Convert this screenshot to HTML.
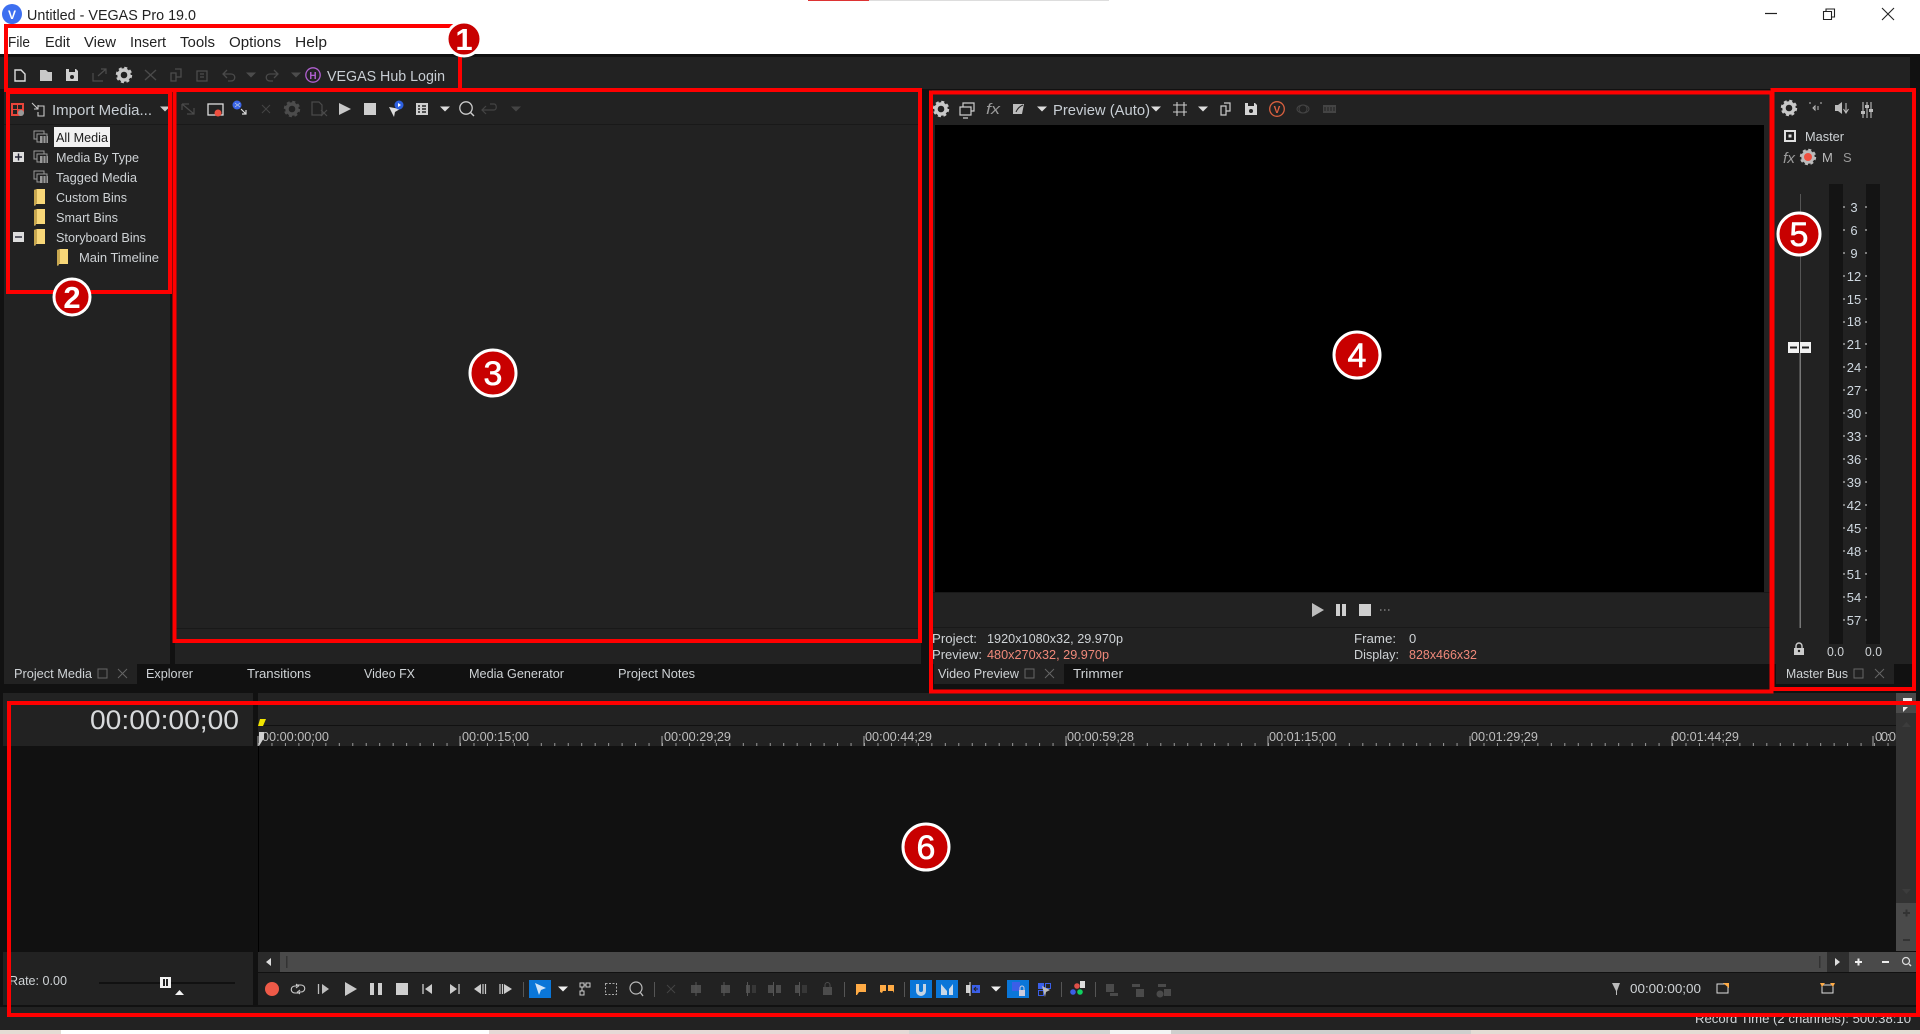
<!DOCTYPE html>
<html lang="en">
<head>
<meta charset="utf-8">
<title>VEGAS Pro 19.0</title>
<style>
html,body{margin:0;padding:0;width:1920px;height:1034px;overflow:hidden;background:#111}
svg{display:block}
text{font-family:"Liberation Sans",sans-serif;fill:#cfd3d6;font-size:13px}
.m{font-size:15px;fill:#222}
.w{font-size:15px;fill:#c8ced4}
.s{fill:#bdbdbd;font-size:13px}
.n{text-anchor:middle;font-size:13px;fill:#cfd8e0}
.d{font-size:31px;font-weight:bold;fill:#fff;text-anchor:middle}
.e{font-size:34px;font-weight:normal;fill:#fff;stroke:#fff;stroke-width:.6;text-anchor:middle}
.c{fill:#c80000;stroke:#fff;stroke-width:3}
.r{fill:none;stroke:#f00;stroke-width:4}
</style>
</head>
<body>
<svg width="1920" height="1034" viewBox="0 0 1920 1034" xmlns="http://www.w3.org/2000/svg">
<defs>
<g id="gear"><circle r="5" fill="none" stroke="currentColor" stroke-width="3.4"/><circle r="7" fill="none" stroke="currentColor" stroke-width="2.4" stroke-dasharray="3 2.5"/></g>
<g id="dd"><path d="M-5 -2.5H5L0 2.5Z" fill="currentColor"/></g>
<g id="media"><rect x="-7" y="-6" width="10" height="8" fill="#222" stroke="#999"/><rect x="-4" y="-3" width="10" height="8" fill="#222" stroke="#999"/><rect x="-1" y="-1" width="8" height="7" fill="#999"/><path d="M2 -1V6M5 -1V6" stroke="#333"/></g>
<g id="folder"><path d="M0 1L3 0H11V15H2L1 17L0 16Z" fill="#f8d778"/><path d="M0 1L3 0V14L1 16L0 16Z" fill="#c9a850"/></g>
<pattern id="ticks" x="258" y="0" width="13.467" height="20" patternUnits="userSpaceOnUse"><rect x="0" y="0" width="1" height="20" fill="#999"/></pattern>
</defs>

<!-- background -->
<rect width="1920" height="1034" fill="#111"/>
<rect width="1920" height="54" fill="#fff"/>
<rect x="808" y="0" width="61" height="1" fill="#d33"/><rect x="869" y="0" width="240" height="1" fill="#ddd"/>

<!-- title -->
<circle cx="12" cy="14" r="10" fill="#3d6ff0"/>
<text x="12" y="19" font-size="12" font-weight="bold" text-anchor="middle" style="fill:#fff;font-size:12px">V</text>
<text x="27" y="20" class="m" textLength="169" lengthAdjust="spacingAndGlyphs">Untitled - VEGAS Pro 19.0</text>
<path d="M1765 13.5H1777" stroke="#222" stroke-width="1.2"/>
<path d="M1823.500 11.500H1831.500V19.500H1823.500ZM1826 11.500V9H1834.500V17H1831.500" fill="none" stroke="#222" stroke-width="1.1"/>
<path d="M1882 8L1894 20M1894 8L1882 20" stroke="#222" stroke-width="1.1"/>
<text x="8" y="47" class="m" textLength="22" lengthAdjust="spacingAndGlyphs">File</text>
<text x="45" y="47" class="m" textLength="25" lengthAdjust="spacingAndGlyphs">Edit</text>
<text x="84" y="47" class="m" textLength="32" lengthAdjust="spacingAndGlyphs">View</text>
<text x="130" y="47" class="m" textLength="36" lengthAdjust="spacingAndGlyphs">Insert</text>
<text x="180" y="47" class="m" textLength="35" lengthAdjust="spacingAndGlyphs">Tools</text>
<text x="229" y="47" class="m" textLength="52" lengthAdjust="spacingAndGlyphs">Options</text>
<text x="295" y="47" class="m" textLength="32" lengthAdjust="spacingAndGlyphs">Help</text>

<!-- main toolbar strip -->
<rect x="0" y="57" width="1910" height="32" fill="#222"/>
<path d="M15 70H21L25 74V81H15Z" fill="none" stroke="#ddd" stroke-width="1.4"/>
<path d="M40 70H46L48 72H52V81H40Z" fill="#c8c8c8"/>
<path d="M66 69H76L78 71V81H66Z" fill="#d0d0d0"/><circle cx="72" cy="77" r="2" fill="#222"/><rect x="69" y="69" width="6" height="3" fill="#222"/>
<path d="M93 73V81H103M98 76L106 69M101 69H106V74" fill="none" stroke="#4c4c4c" stroke-width="1.2"/>
<use href="#gear" x="124" y="75" color="#c8c8c8"/>
<path d="M145 70L156 80M156 70L145 80" stroke="#4a4a4a" stroke-width="1.4"/>
<path d="M171 73H176V81H171ZM175 69H181V77H176" fill="none" stroke="#4c4c4c" stroke-width="1.3"/>
<path d="M197 71H207V81H197ZM200 74H204M200 77H204" fill="none" stroke="#4c4c4c" stroke-width="1.3"/>
<path d="M227 70L223 74L227 78M223 74H231C236 74 236 81 231 81H228" fill="none" stroke="#4a4a4a" stroke-width="1.3"/>
<use href="#dd" x="251" y="75" color="#4c4c4c"/>
<path d="M274 70L278 74L274 78M278 74H270C265 74 265 81 270 81H273" fill="none" stroke="#4a4a4a" stroke-width="1.3"/>
<use href="#dd" x="296" y="75" color="#4c4c4c"/>
<circle cx="313" cy="75" r="7.200" fill="none" stroke="#b060d0" stroke-width="1.300"/>
<text x="313" y="79" text-anchor="middle" style="font-size:10px;font-weight:bold;fill:#b060d0">H</text>
<text x="327" y="81" class="w" textLength="118" lengthAdjust="spacingAndGlyphs">VEGAS Hub Login</text>

<!-- panels -->
<rect x="4" y="90" width="166" height="574" fill="#222"/>
<rect x="175" y="90" width="746" height="574" fill="#222"/>
<rect x="932" y="90" width="838" height="574" fill="#222"/>
<rect x="1773" y="90" width="140" height="574" fill="#222"/>
<rect x="4" y="124" width="166" height="1" fill="#191919"/>
<rect x="175" y="124" width="746" height="1" fill="#191919"/>
<rect x="175" y="628" width="746" height="1" fill="#191919"/>

<!-- project media toolbar -->
<path d="M11 103H24V113H21V116H11Z" fill="#e8453a"/><path d="M13 105H17V109H13ZM18 105H22V109H18ZM13 110H17V114H13Z" fill="#222"/><circle cx="21" cy="113" r="3" fill="#999"/>
<path d="M32 103L38 109M38 105V109H34M38 106H44V116H38V112" fill="none" stroke="#c8c8c8" stroke-width="1.100"/>
<text x="52" y="115" class="w" textLength="100" lengthAdjust="spacingAndGlyphs">Import Media...</text>
<use href="#dd" x="165" y="109" color="#ccc"/>

<!-- tree -->
<rect x="54" y="127" width="56" height="20" fill="#f2f2f2"/>
<text x="56" y="142" style="fill:#1a1a1a" textLength="52" lengthAdjust="spacingAndGlyphs">All Media</text>
<use href="#media" x="41" y="137"/><use href="#media" x="41" y="157"/><use href="#media" x="41" y="177"/>
<use href="#folder" x="34" y="189"/><use href="#folder" x="34" y="209"/><use href="#folder" x="34" y="229"/><use href="#folder" x="57" y="249"/>
<text x="56" y="162" textLength="83" lengthAdjust="spacingAndGlyphs">Media By Type</text>
<text x="56" y="182" textLength="81" lengthAdjust="spacingAndGlyphs">Tagged Media</text>
<text x="56" y="202" textLength="71" lengthAdjust="spacingAndGlyphs">Custom Bins</text>
<text x="56" y="222" textLength="62" lengthAdjust="spacingAndGlyphs">Smart Bins</text>
<text x="56" y="242" textLength="90" lengthAdjust="spacingAndGlyphs">Storyboard Bins</text>
<text x="79" y="262" textLength="80" lengthAdjust="spacingAndGlyphs">Main Timeline</text>
<rect x="13" y="152" width="11" height="10" fill="#ddd"/><path d="M15 157H22M18.500 153.500V160.500" stroke="#223" stroke-width="1.400"/>
<rect x="13" y="232" width="11" height="10" fill="#ddd"/><path d="M15 237H22" stroke="#223" stroke-width="1.400"/>

<!-- explorer toolbar -->
<path d="M182 104H189M182 104V110M182 104L194 114M194 108V114H187" fill="none" stroke="#4a4a4a" stroke-width="1.200"/>
<rect x="208" y="104" width="15" height="11" fill="none" stroke="#ddd" stroke-width="1.300"/><circle cx="218" cy="113" r="3.500" fill="#ee5040"/>
<circle cx="237" cy="105" r="4.500" fill="#3a64e8"/><path d="M235 103L240 107M235 107L240 103" stroke="#bcd" stroke-width=".8"/><path d="M241 109L246 114M246 110V114H242" fill="none" stroke="#ddd" stroke-width="1.200"/>
<path d="M262 105L270 113M270 105L262 113" stroke="#444" stroke-width="1.100"/>
<use href="#gear" x="292" y="109" color="#4c4c4c"/>
<path d="M312 102H319L322 105V115H312ZM321 110L327 116M327 110L321 116" fill="none" stroke="#4a4a4a" stroke-width="1.200"/>
<path d="M339 103V115L351 109Z" fill="#c8c8c8"/>
<rect x="364" y="103" width="12" height="12" fill="#cfcfcf"/>
<path d="M389 107L400 109L395 112L394 117Z" fill="#ddd"/><circle cx="399" cy="105" r="4.500" fill="#2d60e0"/><path d="M398 103V107L401 105Z" fill="#fff"/>
<rect x="416" y="103" width="12" height="12" fill="#d0d0d0"/><path d="M418 106H420M418 109H420M418 112H420M422 106H426M422 109H426M422 112H426" stroke="#222" stroke-width="1.500"/>
<use href="#dd" x="445" y="109" color="#ddd"/>
<circle cx="466" cy="108" r="6.200" fill="none" stroke="#ccc" stroke-width="1.300"/><path d="M470.500 112.500L474 116" stroke="#ccc" stroke-width="1.400"/>
<path d="M486 106L482 110L486 114M482 110H494C497 110 497 104 494 104H490" fill="none" stroke="#444" stroke-width="1.200"/>
<use href="#dd" x="516" y="109" color="#444"/>

<!-- preview toolbar -->
<use href="#gear" x="941" y="109" color="#c8c8c8"/>
<path d="M960 107H971V115H960ZM963 107V103H974V111H971M963 118H968" fill="none" stroke="#ccc" stroke-width="1.200"/>
<text x="986" y="114" style="font-size:15px;font-style:italic;fill:#9a9a9a" textLength="14" lengthAdjust="spacingAndGlyphs">fx</text>
<path d="M1013 104H1024L1022 114H1013Z" fill="#bcbcbc"/><path d="M1016 112Q1018 107 1023 105" stroke="#222" fill="none"/>
<use href="#dd" x="1042" y="109" color="#ddd"/>
<text x="1053" y="115" class="w" textLength="97" lengthAdjust="spacingAndGlyphs">Preview (Auto)</text>
<use href="#dd" x="1156" y="109" color="#ddd"/>
<path d="M1173 105H1187M1173 112H1187M1177 102V116M1184 102V116" stroke="#ccc" stroke-width="1.100"/>
<use href="#dd" x="1203" y="109" color="#ddd"/>
<path d="M1221 106H1226V115H1221ZM1224 103H1230V111H1226" fill="none" stroke="#ccc" stroke-width="1.200"/>
<path d="M1245 103H1255L1257 105V115H1245Z" fill="#d4d4d4"/><circle cx="1251" cy="111" r="2" fill="#222"/><rect x="1248" y="103" width="6" height="3" fill="#222"/>
<circle cx="1277" cy="109" r="7.300" fill="none" stroke="#d8603f" stroke-width="1.300"/>
<text x="1277" y="113" text-anchor="middle" style="font-size:10px;font-weight:bold;fill:#e06040">V</text>
<ellipse cx="1303" cy="109" rx="6" ry="4" fill="none" stroke="#444"/><circle cx="1303" cy="109" r="4" fill="none" stroke="#444"/>
<rect x="1323" y="105" width="13" height="8" fill="#444"/><path d="M1325 107V111M1328 107V111M1331 107V111M1334 107V111" stroke="#222"/>

<!-- preview -->
<rect x="935" y="125" width="829" height="467" fill="#000"/>
<rect x="932" y="592" width="838" height="1" fill="#191919"/>
<rect x="932" y="627" width="838" height="1" fill="#191919"/>
<path d="M1312 603V617L1324 610Z" fill="#bcbcbc"/>
<rect x="1336" y="604" width="4" height="12" fill="#cfcfcf"/><rect x="1342" y="604" width="4" height="12" fill="#cfcfcf"/>
<rect x="1359" y="604" width="12" height="12" fill="#cfcfcf"/>
<path d="M1380 610h1.500M1384 610h1.500M1388 610h1.500" stroke="#aaa"/>
<text x="932" y="643" textLength="45" lengthAdjust="spacingAndGlyphs">Project:</text>
<text x="987" y="643" textLength="136" lengthAdjust="spacingAndGlyphs">1920x1080x32, 29.970p</text>
<text x="932" y="659" textLength="50" lengthAdjust="spacingAndGlyphs">Preview:</text>
<text x="987" y="659" style="fill:#f0897a" textLength="122" lengthAdjust="spacingAndGlyphs">480x270x32, 29.970p</text>
<text x="1354" y="643" textLength="42" lengthAdjust="spacingAndGlyphs">Frame:</text>
<text x="1409" y="643">0</text>
<text x="1354" y="659" textLength="45" lengthAdjust="spacingAndGlyphs">Display:</text>
<text x="1409" y="659" style="fill:#f0897a" textLength="68" lengthAdjust="spacingAndGlyphs">828x466x32</text>

<!-- mixer -->
<use href="#gear" x="1789" y="108" color="#c8c8c8"/>
<path d="M1809 103H1811M1820 103H1822M1813 108L1815 106V110ZM1818 106V110" stroke="#bbb" fill="none"/>
<path d="M1835 105H1838L1842 102V114L1838 111H1835Z" fill="#bbb"/><path d="M1846 103V112M1843.500 109L1846 113L1848.500 109" fill="none" stroke="#bbb" stroke-width="1.100"/>
<path d="M1863 102V118M1867 102V118M1871 102V118" stroke="#bbb" stroke-width="1.100"/><rect x="1861" y="111" width="4" height="3" fill="#bbb"/><rect x="1865" y="105" width="4" height="3" fill="#bbb"/><rect x="1869" y="109" width="4" height="3" fill="#bbb"/>
<rect x="1785" y="131" width="10" height="10" fill="none" stroke="#e0e0e0" stroke-width="2"/><rect x="1788.500" y="134.500" width="3" height="3" fill="#e0e0e0"/>
<text x="1805" y="141" textLength="39" lengthAdjust="spacingAndGlyphs">Master</text>
<text x="1783" y="163" style="font-size:15px;font-style:italic;fill:#9a9a9a" textLength="12" lengthAdjust="spacingAndGlyphs">fx</text>
<use href="#gear" x="1808" y="157" color="#bbb"/><circle cx="1808" cy="157" r="4" fill="#ee5040"/>
<text x="1822" y="162" style="font-size:13px;fill:#bbb" textLength="11">M</text>
<text x="1843" y="162" style="font-size:13px;fill:#999" textLength="9">S</text>
<rect x="1800" y="194" width="1" height="148" fill="#555"/><rect x="1799.500" y="353" width="1.500" height="275" fill="#777"/>
<rect x="1788" y="342" width="11" height="11" fill="#f2f2f2"/><rect x="1800" y="342" width="11" height="11" fill="#f2f2f2"/>
<rect x="1790" y="346.500" width="7" height="2" fill="#222"/><rect x="1802" y="346.500" width="7" height="2" fill="#222"/>
<rect x="1829" y="184" width="14" height="460" fill="#141414"/><rect x="1866" y="184" width="14" height="460" fill="#141414"/>
<g>
<path d="M1843 207h2M1865 207h2M1843 230h2M1865 230h2M1843 253h2M1865 253h2M1843 276h2M1865 276h2M1843 299h2M1865 299h2M1843 322h2M1865 322h2M1843 344h2M1865 344h2M1843 367h2M1865 367h2M1843 390h2M1865 390h2M1843 413h2M1865 413h2M1843 436h2M1865 436h2M1843 459h2M1865 459h2M1843 482h2M1865 482h2M1843 505h2M1865 505h2M1843 528h2M1865 528h2M1843 551h2M1865 551h2M1843 574h2M1865 574h2M1843 597h2M1865 597h2M1843 620h2M1865 620h2" stroke="#ddd"/>
<text x="1854" y="212" class="n">3</text><text x="1854" y="235" class="n">6</text><text x="1854" y="258" class="n">9</text><text x="1854" y="281" class="n">12</text><text x="1854" y="304" class="n">15</text><text x="1854" y="326" class="n">18</text><text x="1854" y="349" class="n">21</text><text x="1854" y="372" class="n">24</text><text x="1854" y="395" class="n">27</text><text x="1854" y="418" class="n">30</text><text x="1854" y="441" class="n">33</text><text x="1854" y="464" class="n">36</text><text x="1854" y="487" class="n">39</text><text x="1854" y="510" class="n">42</text><text x="1854" y="533" class="n">45</text><text x="1854" y="556" class="n">48</text><text x="1854" y="579" class="n">51</text><text x="1854" y="602" class="n">54</text><text x="1854" y="625" class="n">57</text>
</g>
<path d="M1796 648V646A3 3 0 0 1 1802 646V648" fill="none" stroke="#ccc" stroke-width="1.400"/><rect x="1794" y="648" width="10" height="7" fill="#ccc"/><circle cx="1799" cy="651" r="1.200" fill="#222"/>
<text x="1827" y="656" textLength="17" lengthAdjust="spacingAndGlyphs">0.0</text>
<text x="1865" y="656" textLength="17" lengthAdjust="spacingAndGlyphs">0.0</text>

<!-- tab bars -->
<rect x="4" y="664" width="133" height="20" fill="#222"/>
<rect x="934" y="664" width="130" height="20" fill="#222"/>
<rect x="1776" y="664" width="118" height="20" fill="#222"/>
<text x="14" y="678" textLength="78" lengthAdjust="spacingAndGlyphs">Project Media</text>
<rect x="98" y="669" width="9" height="9" fill="none" stroke="#666"/><path d="M118 669L127 678M127 669L118 678" stroke="#666"/>
<text x="146" y="678" textLength="47" lengthAdjust="spacingAndGlyphs">Explorer</text>
<text x="247" y="678" textLength="64" lengthAdjust="spacingAndGlyphs">Transitions</text>
<text x="364" y="678" textLength="51" lengthAdjust="spacingAndGlyphs">Video FX</text>
<text x="469" y="678" textLength="95" lengthAdjust="spacingAndGlyphs">Media Generator</text>
<text x="618" y="678" textLength="77" lengthAdjust="spacingAndGlyphs">Project Notes</text>
<text x="938" y="678" textLength="81" lengthAdjust="spacingAndGlyphs">Video Preview</text>
<rect x="1025" y="669" width="9" height="9" fill="none" stroke="#666"/><path d="M1045 669L1054 678M1054 669L1045 678" stroke="#666"/>
<text x="1073" y="678" textLength="50" lengthAdjust="spacingAndGlyphs">Trimmer</text>
<text x="1786" y="678" textLength="62" lengthAdjust="spacingAndGlyphs">Master Bus</text>
<rect x="1854" y="669" width="9" height="9" fill="none" stroke="#666"/><path d="M1875 669L1884 678M1884 669L1875 678" stroke="#666"/>

<!-- timeline -->
<rect x="3" y="693" width="250" height="53" fill="#222"/>
<rect x="258" y="693" width="1638" height="53" fill="#222"/>
<rect x="258" y="725" width="1638" height="1" fill="#111"/>
<rect x="1896" y="713" width="20" height="190" fill="#333"/>
<rect x="1896" y="693" width="20" height="20" fill="#4a4a4a"/>
<rect x="1896" y="903" width="20" height="48" fill="#4a4a4a"/>
<rect x="1903" y="698" width="9" height="3" fill="#eee"/><path d="M1903 707V712L1908 707Z" fill="#eee"/>
<path d="M1902 727H1911L1906.500 722Z" fill="#3c3c3c"/>
<path d="M1902 889H1911L1906.500 894Z" fill="#3c3c3c"/>
<path d="M1903 913H1910M1906.500 909.500V916.500M1903 940H1910" stroke="#333" stroke-width="2"/>
<text x="239" y="729" text-anchor="end" style="font-size:27px;fill:#d8dadc" textLength="149" lengthAdjust="spacingAndGlyphs">00:00:00;00</text>
<rect x="258" y="743" width="1638" height="3" fill="url(#ticks)"/>
<path d="M258 736V746M460 736V746M662 736V746M864 736V746M1066 736V746M1268 736V746M1470 736V746M1672 736V746M1873 736V746" stroke="#aaa" stroke-width="1"/>
<g>
<text x="262" y="741" class="s" textLength="67" lengthAdjust="spacingAndGlyphs">00:00:00;00</text>
<text x="462" y="741" class="s" textLength="67" lengthAdjust="spacingAndGlyphs">00:00:15;00</text>
<text x="664" y="741" class="s" textLength="67" lengthAdjust="spacingAndGlyphs">00:00:29;29</text>
<text x="865" y="741" class="s" textLength="67" lengthAdjust="spacingAndGlyphs">00:00:44;29</text>
<text x="1067" y="741" class="s" textLength="67" lengthAdjust="spacingAndGlyphs">00:00:59;28</text>
<text x="1269" y="741" class="s" textLength="67" lengthAdjust="spacingAndGlyphs">00:01:15;00</text>
<text x="1471" y="741" class="s" textLength="67" lengthAdjust="spacingAndGlyphs">00:01:29;29</text>
<text x="1672" y="741" class="s" textLength="67" lengthAdjust="spacingAndGlyphs">00:01:44;29</text>
<text x="1875" y="741" class="s" textLength="21" lengthAdjust="spacing">00:0</text>
</g>
<path d="M259 732H264V738L259 746Z" fill="#d0d0d0"/>
<path d="M260 719H266L263 726H258Z" fill="#f0e400"/>
<rect x="258" y="746" width="1" height="206" fill="#000"/>
<rect x="3" y="952" width="250" height="53" fill="#222"/>
<rect x="258" y="952" width="1658" height="20" fill="#4a4a4a"/>
<rect x="258" y="952" width="22" height="20" fill="#2a2a2a"/>
<rect x="1827" y="952" width="22" height="20" fill="#2e2e2e"/>
<path d="M271 958V966L266 962Z" fill="#ddd"/><path d="M1835 958V966L1840 962Z" fill="#ddd"/>
<rect x="286" y="956" width="1.500" height="12" fill="#333"/><rect x="1819" y="956" width="1.500" height="12" fill="#333"/>
<path d="M1855 962H1862M1858.500 958.500V965.500M1882 962H1889" stroke="#eee" stroke-width="2"/>
<circle cx="1906" cy="961" r="3.500" fill="none" stroke="#ddd" stroke-width="1.200"/><path d="M1909 964L1911 966" stroke="#ddd" stroke-width="1.400"/>
<rect x="258" y="973" width="1658" height="32" fill="#222"/>
<rect x="0" y="1007" width="1920" height="23" fill="#222"/>

<!-- rate -->
<text x="9" y="985" textLength="58" lengthAdjust="spacingAndGlyphs">Rate: 0.00</text>
<rect x="99" y="982" width="136" height="2" fill="#111"/>
<rect x="160" y="977" width="11" height="11" fill="#f2f2f2"/><rect x="163" y="979" width="2" height="7" fill="#222"/><rect x="166" y="979" width="2" height="7" fill="#222"/>
<path d="M175 995H184L179.500 990Z" fill="#f2f2f2"/>

<!-- transport -->
<ellipse cx="272" cy="989" rx="7" ry="7" fill="#ee5a48"/>
<path d="M296 985H301C306 985 306 992 301 992H299M300 994L297.500 992L300 990M300 993H295C290 993 290 986 295 986H297M296 984L298.500 986L296 988" fill="none" stroke="#ccc" stroke-width="1.100"/>
<path d="M318.500 984V994" stroke="#bdbdbd" stroke-width="1.300"/><path d="M322 984V994L329 989Z" fill="#bdbdbd"/>
<path d="M345 982V996L357 989Z" fill="#c8c8c8"/>
<rect x="370" y="983" width="4" height="12" fill="#cfcfcf"/><rect x="378" y="983" width="4" height="12" fill="#cfcfcf"/>
<rect x="396" y="983" width="12" height="12" fill="#cfcfcf"/>
<path d="M423 984V994" stroke="#ccc" stroke-width="1.300"/><path d="M432 984V994L425 989Z" fill="#ccc"/>
<path d="M459 984V994" stroke="#ccc" stroke-width="1.300"/><path d="M450 984V994L457 989Z" fill="#ccc"/>
<path d="M474 989L481 984V994Z" fill="#ccc"/><path d="M483 984V994M485.500 984V994" stroke="#ccc" stroke-width="1.200"/>
<path d="M512 989L504 984V994Z" fill="#ccc"/><path d="M500 984V994M502.500 984V994" stroke="#ccc" stroke-width="1.200"/>
<rect x="523" y="982" width="1" height="15" fill="#555"/>
<rect x="529" y="980" width="22" height="18" fill="#0a76d8"/><path d="M535 983L546 988L541 990L539 995Z" fill="#cfe4f8"/>
<use href="#dd" x="563" y="989" color="#eee"/>
<path d="M580 983h4v4h-4ZM586 983h4v4h-4ZM580 991h4v4h-4ZM582 987v4M584 985h2" fill="none" stroke="#ccc"/>
<rect x="605.500" y="983.500" width="11" height="11" fill="none" stroke="#aaa" stroke-dasharray="2 1.500"/>
<circle cx="636" cy="988" r="6" fill="none" stroke="#bbb" stroke-width="1.200"/><path d="M640 992L643 996" stroke="#bbb" stroke-width="1.300"/>
<rect x="654" y="982" width="1" height="15" fill="#555"/>
<path d="M667 985L675 993M675 985L667 993" stroke="#444"/>
<g fill="#4c4c4c"><rect x="691" y="985" width="10" height="8"/><rect x="721" y="985" width="9" height="8"/><rect x="746" y="985" width="4" height="8"/><rect x="752" y="985" width="4" height="8" opacity=".5"/><rect x="768" y="985" width="5" height="8"/><rect x="776" y="985" width="5" height="8"/><rect x="795" y="985" width="5" height="8"/><rect x="802" y="985" width="5" height="8" opacity=".5"/><rect x="823" y="987" width="9" height="8"/></g>
<path d="M696 982V996M724 982V996M747.500 982V996M773.500 982V996M799.500 982V996" stroke="#555"/><path d="M825 987V985A2.500 2.500 0 0 1 830 985V987" fill="none" stroke="#4c4c4c"/>
<rect x="844" y="982" width="1" height="15" fill="#555"/>
<path d="M856 984H866V992H859L857 995L856 995Z" fill="#ffab45"/>
<path d="M880 985H886V991H883L882 993L880 992Z" fill="#ffab45"/><path d="M888 985H894V993L893 991H888Z" fill="#ffab45"/>
<rect x="904" y="982" width="1" height="15" fill="#555"/>
<rect x="910" y="980" width="22" height="18" fill="#0a76d8"/><path d="M916 984H919V990A2 2 0 0 0 923 990V984H926V991A5 5 0 0 1 916 991Z" fill="#c4d4e4"/>
<rect x="936" y="980" width="22" height="18" fill="#0a76d8"/><path d="M941 984L947 991V995H941ZM953 984V995H949V989Z" fill="#c8d8e8"/>
<rect x="966" y="985" width="4" height="8" fill="#d0d0d0"/><path d="M970 982V996" stroke="#eee"/><rect x="972" y="985" width="8" height="8" fill="#3a5fe8"/><path d="M978 989H974M976 987L974 989L976 991" fill="none" stroke="#222"/>
<use href="#dd" x="996" y="989" color="#eee"/>
<rect x="1007" y="980" width="22" height="18" fill="#0a76d8"/><rect x="1012" y="982" width="8" height="9" fill="#3a5fe8"/><rect x="1019" y="990" width="6" height="6" fill="#ccd"/><path d="M1020 990V988A2 2 0 0 1 1024 988V990" fill="none" stroke="#ccd"/>
<rect x="1038" y="983" width="6" height="6" fill="#3a5fe8"/><rect x="1045.500" y="983.500" width="5" height="5" fill="none" stroke="#3a5fe8"/><rect x="1038.500" y="990.500" width="5" height="5" fill="none" stroke="#3a5fe8"/><path d="M1042 986L1050 990L1046 992L1045 997Z" fill="#bbb"/>
<rect x="1061" y="982" width="1" height="15" fill="#555"/>
<circle cx="1077" cy="986" r="2.800" fill="#e05048"/><circle cx="1073" cy="992" r="2.800" fill="#3a5fe8"/><circle cx="1080" cy="992" r="2.800" fill="#10d060"/><rect x="1080" y="981" width="5" height="7" fill="#ddd"/>
<rect x="1095" y="982" width="1" height="15" fill="#555"/>
<g fill="#4a4a4a"><rect x="1106" y="984" width="8" height="8"/><rect x="1110" y="993" width="8" height="3"/><rect x="1132" y="984" width="8" height="3"/><rect x="1136" y="989" width="8" height="8"/><rect x="1158" y="984" width="8" height="3"/><rect x="1164" y="989" width="7" height="7"/><circle cx="1160" cy="994" r="3.500"/></g>

<!-- right time -->
<path d="M1612 983H1620L1617 991V995H1616V991Z" fill="#bbb"/>
<text x="1630" y="993" textLength="71" lengthAdjust="spacingAndGlyphs">00:00:00;00</text>
<rect x="1717" y="984" width="11" height="9" fill="none" stroke="#ddd"/><path d="M1723 983H1729V988Z" fill="#ffab45"/>
<rect x="1822" y="985" width="11" height="8" fill="none" stroke="#ddd"/><path d="M1820 983H1825L1822 987ZM1835 983H1830L1833 987Z" fill="#ffab45"/>

<!-- status -->
<text x="1695" y="1023" textLength="216" lengthAdjust="spacingAndGlyphs">Record Time (2 channels): 500:38:10</text>

<!-- bottom strip -->
<rect x="0" y="1030" width="1920" height="4" fill="#e4dcd4"/>
<rect x="61" y="1030" width="428" height="4" fill="#fff"/>
<rect x="489" y="1030" width="420" height="4" fill="#e6d9d6"/>
<rect x="909" y="1030" width="201" height="4" fill="#d4d4d2"/>
<rect x="1110" y="1030" width="61" height="4" fill="#f4f4f4"/>
<rect x="1171" y="1030" width="300" height="4" fill="#cfcfcd"/>

<!-- annotation rectangles -->
<rect class="r" x="8" y="92" width="162" height="200"/>
<rect class="r" x="174.500" y="90" width="745.500" height="551"/>
<rect class="r" x="931" y="92.500" width="840.500" height="599"/>
<rect class="r" x="1772.500" y="90" width="141.500" height="599"/>
<rect class="r" x="9" y="703" width="1909" height="312"/>
<rect class="r" x="6" y="26" width="454" height="64"/>

<!-- annotation badges -->
<circle class="c" cx="464" cy="39" r="17"/><text class="d" x="464" y="50">1</text>
<circle class="c" cx="72" cy="297" r="18"/><text class="d" x="72" y="308">2</text>
<circle class="c" cx="493" cy="373" r="23"/><text class="e" x="493" y="385">3</text>
<circle class="c" cx="1357" cy="355" r="23"/><text class="e" x="1357" y="367">4</text>
<circle class="c" cx="1799" cy="234" r="21"/><text class="e" x="1799" y="246">5</text>
<circle class="c" cx="926" cy="847" r="23"/><text class="e" x="926" y="859">6</text>
</svg>
</body>
</html>
